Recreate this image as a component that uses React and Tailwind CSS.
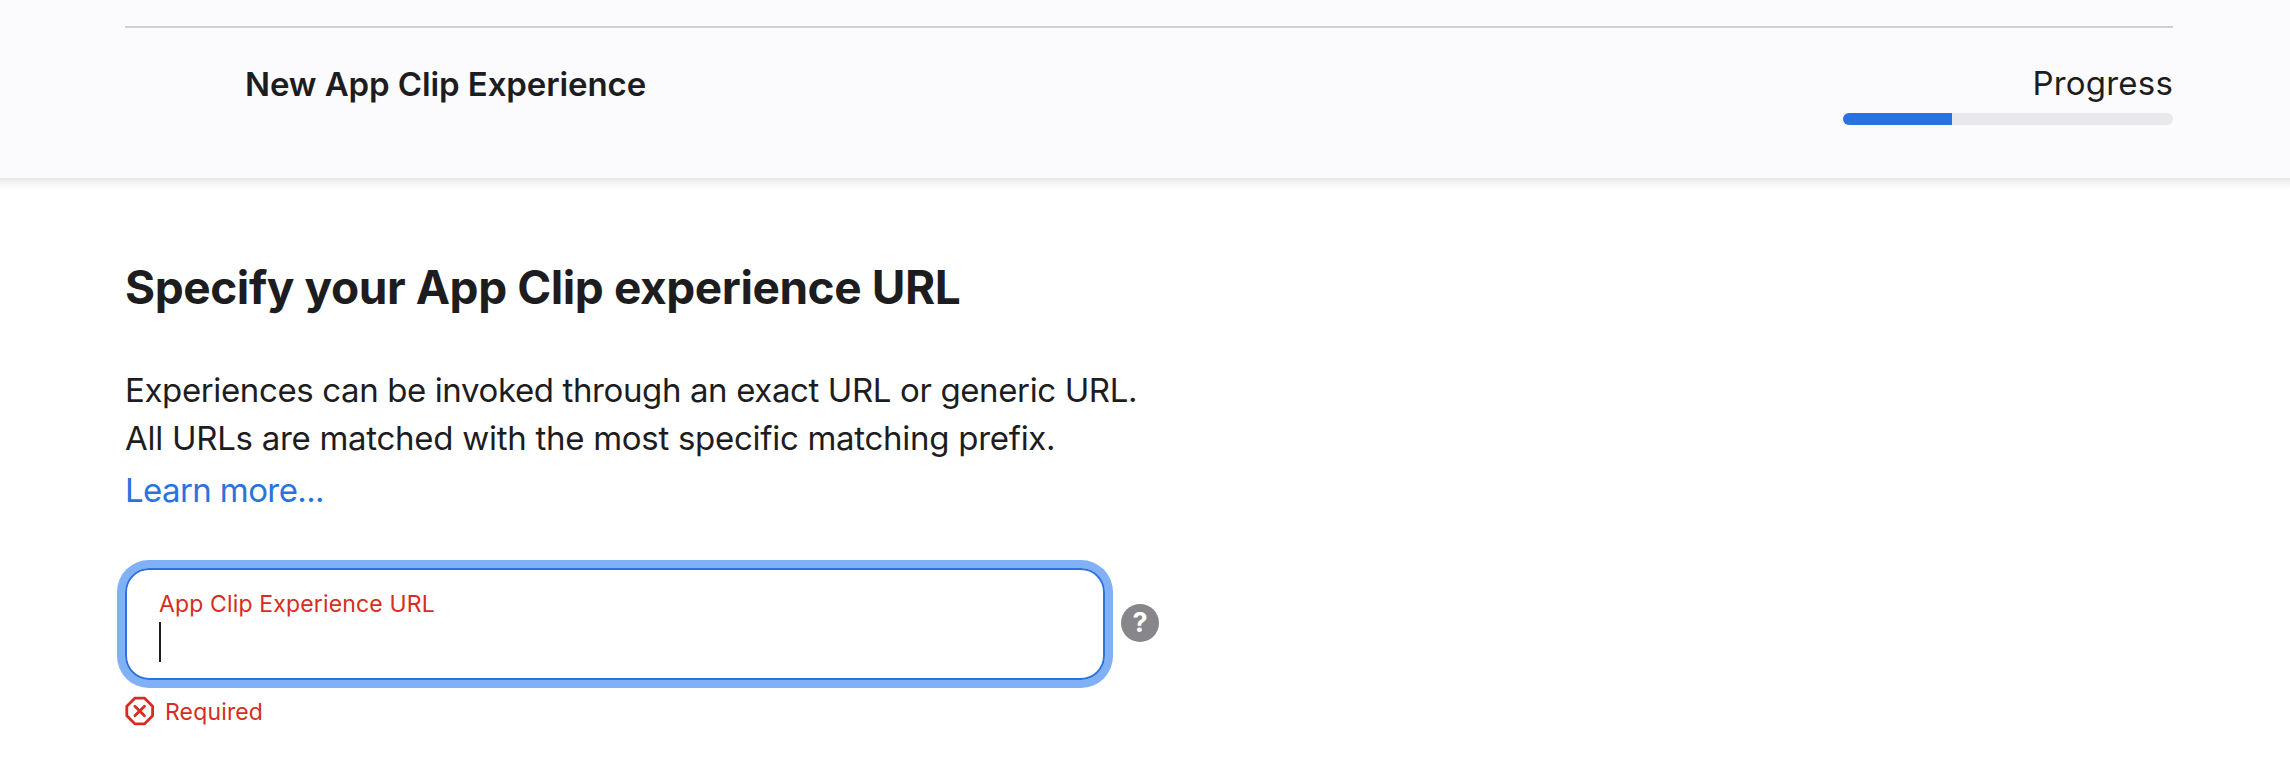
export default function App() {
  return (
    <div className="flex h-[764px] w-[2290px] flex-col overflow-hidden bg-white font-['Inter',sans-serif] text-[#1d1d1f]">
      <header className="h-[178px] shrink-0 bg-[#fbfbfd] pl-[125px] pr-[117px] pt-[26px]">
        <div className="flex items-start justify-between border-t-2 border-[#d0d0d3] pl-[120px] pt-[34px]">
          <h2 className="whitespace-nowrap text-[33px] font-semibold leading-[44px] tracking-[-0.1px]">New App Clip Experience</h2>
          <div className="-mt-px flex w-[330px] flex-col items-end">
            <span className="text-[33px] leading-[44px] tracking-[0.2px]">Progress</span>
            <div className="mt-[8px] h-[12px] w-full overflow-hidden rounded-full bg-[#e8e8ed]">
              <div className="h-full w-[109px] bg-[#2a73de]" />
            </div>
          </div>
        </div>
      </header>
      <div className="h-[12px] shrink-0 bg-linear-to-b from-[#e7e7e7] via-[#f6f6f6] to-white" />
      <main className="flex flex-col items-start px-[125px] pt-[67px]">
        <h1 className="whitespace-nowrap text-[46px] font-bold leading-[60px] tracking-[-0.43px]">Specify your App Clip experience URL</h1>
        <p className="mt-[49px] whitespace-nowrap text-[33px] leading-[48px] tracking-[-0.38px]">Experiences can be invoked through an exact URL or generic URL.</p>
        <p className="whitespace-nowrap text-[33px] leading-[48px] tracking-[-0.28px]">All URLs are matched with the most specific matching prefix.</p>
        <a className="mt-[4px] text-[33px] leading-[48px] tracking-[-0.6px] text-[#2a73de]">Learn more...</a>
        <div className="mt-[54px] flex items-center gap-[16px]">
          <div className="h-[112px] w-[980px] rounded-[24px] border-2 border-[#2a73de] px-[32px] pt-[18px] ring-8 ring-[#80b1f7]">
            <div className="text-[23px] leading-[32px] tracking-[0.15px] text-[#d72d20]">App Clip Experience URL</div>
            <div className="mt-[2px] h-[40px] w-[2px] bg-[#1d1d1f]" />
          </div>
          <div className="-mt-[2px] flex size-[38px] items-center justify-center rounded-full bg-[#86868b] text-[27px] font-bold text-white">?</div>
        </div>
        <div className="mt-[14px] flex items-center gap-[10px] text-[#d72d20]">
          <svg className="size-[30px]" viewBox="0 0 30 30" fill="none" stroke="currentColor" strokeWidth="2.8" strokeLinejoin="round" strokeLinecap="round">
            <path d="M9.800 2.200h9.800L27.600 10.200v9.600l-8 8H9.800l-8-8V10.200z" />
            <path d="m9.900 10.200 9.600 9.600M19.500 10.200 9.900 19.800" />
          </svg>
          <span className="mt-[2px] text-[23px] leading-[32px] tracking-[0.15px]">Required</span>
        </div>
      </main>
    </div>
  );
}
